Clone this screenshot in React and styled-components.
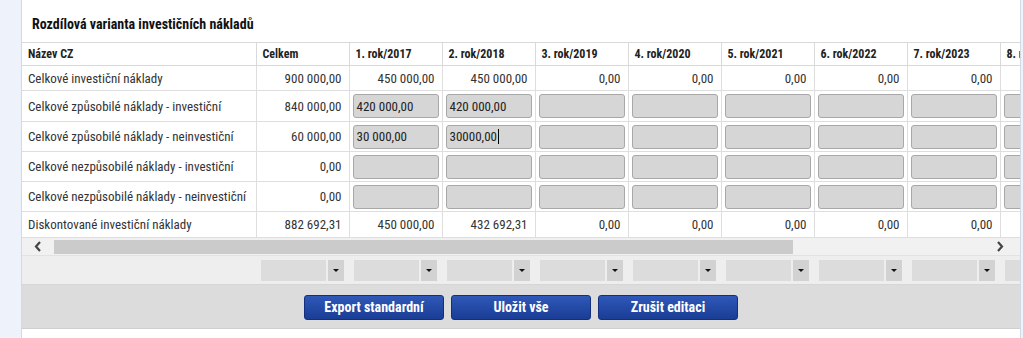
import React from 'react'
import styled, { createGlobalStyle } from 'styled-components'

const GlobalStyle = createGlobalStyle`
  html, body {
    margin: 0;
    padding: 0;
    background: #eef2fa;
    font-family: "Roboto", "Liberation Sans", sans-serif;
    font-stretch: condensed;
    color: #333;
  }
`

const Page = styled.div`
  display: flex;
  padding: 0 2px 0 21px;
  height: 338px;
  overflow: hidden;
`

const Panel = styled.div`
  flex: 1;
  min-width: 0;
  background: #fff;
  border-left: 1px solid #d4d8e0;
  border-right: 1px solid #d4d8e0;
  display: flex;
  flex-direction: column;
`

const Title = styled.h2`
  margin: 0;
  padding: 16px 0 0 10px;
  height: 42px;
  box-sizing: border-box;
  font-size: 14px;
  line-height: 17px;
  font-weight: bold;
  font-stretch: condensed;
  color: #111;
`

const Clip = styled.div`
  overflow: hidden;
`

const Table = styled.table`
  border-collapse: collapse;
  table-layout: fixed;
  width: 1071px;
  font-size: 13px;
`

const Th = styled.th`
  height: 22px;
  padding: 0 6px;
  text-align: left;
  font-size: 12px;
  font-weight: bold;
  font-stretch: condensed;
  color: #222;
  border: 1px solid #d9d9d9;
  border-left: ${({ $first }) => ($first ? 'none' : '1px solid #d9d9d9')};
  white-space: nowrap;
  overflow: hidden;
`

const Td = styled.td`
  height: ${({ $h }) => $h}px;
  padding: ${({ $input }) => ($input ? '0 3px' : '0 7px 0 6px')};
  text-align: ${({ $num }) => ($num ? 'right' : 'left')};
  border: 1px solid #dedede;
  border-left: ${({ $first }) => ($first ? 'none' : '1px solid #dedede')};
  white-space: nowrap;
  overflow: hidden;
  color: #333;
`

const Field = styled.div`
  height: 24px;
  box-sizing: border-box;
  background: #d6d6d6;
  border: 1px solid #a8a8a8;
  border-radius: 3px;
  padding: 0 3px;
  display: flex;
  align-items: center;
  font-size: 13px;
  color: #222;
`

const Caret = styled.span`
  display: inline-block;
  width: 1px;
  height: 15px;
  background: #000;
  margin-left: 1px;
`

const ScrollBar = styled.div`
  display: flex;
  align-items: center;
  height: 17px;
  background: #f1f1f1;
  border-bottom: 1px solid #e2e2e2;
`

const Arrow = styled.div`
  width: ${({ $w }) => $w}px;
  height: 100%;
  display: flex;
  justify-content: center;
  align-items: center;
`

const Track = styled.div`
  flex: 1;
  height: 100%;
  display: flex;
  align-items: center;
`

const Thumb = styled.div`
  height: 14px;
  background: #cbcbcb;
`

const FilterRow = styled.div`
  display: flex;
  align-items: center;
  height: 28px;
  background: #eeeeee;
  border-bottom: 1px solid #d6d6d6;
  padding-left: 234px;
  overflow: hidden;
`

const FilterCell = styled.div`
  flex: 0 0 93px;
  display: flex;
  gap: 2px;
  padding-left: 5px;
  box-sizing: border-box;
`

const SelectBox = styled.div`
  width: 65px;
  height: 21px;
  background: #dcdcdc;
`

const SelectBtn = styled.div`
  width: 16px;
  height: 21px;
  background: #d2d2d2;
  display: flex;
  align-items: center;
  justify-content: center;
  &::after {
    content: '';
    border-left: 3px solid transparent;
    border-right: 3px solid transparent;
    border-top: 3px solid #111;
  }
`

const ButtonBar = styled.div`
  display: flex;
  justify-content: center;
  gap: 7px;
  height: 43px;
  align-items: center;
  background: #dcdcdc;
  border-bottom: 1px solid #cfcfcf;
`

const Button = styled.button`
  width: 140px;
  height: 25px;
  border: 1px solid #142f7e;
  border-radius: 3px;
  background: linear-gradient(#2f58b8, #1a3d95);
  color: #fff;
  font-family: inherit;
  font-stretch: condensed;
  font-size: 14px;
  font-weight: bold;
  padding: 0;
  margin-top: 1px;
`

const Chevron = ({ dir }) => (
  <svg width="8" height="11" viewBox="0 0 8 11">
    <polyline
      points={dir === 'left' ? '6,1 2,5.5 6,10' : '2,1 6,5.5 2,10'}
      fill="none"
      stroke="#444"
      strokeWidth="2.2"
    />
  </svg>
)

const years = ['1. rok/2017', '2. rok/2018', '3. rok/2019', '4. rok/2020', '5. rok/2021', '6. rok/2022', '7. rok/2023', '8. rok/2024']

const empty = ['', '', '', '', '', '', '', '']

const rows = [
  { name: 'Celkové investiční náklady', total: '900 000,00', h: 24, values: ['450 000,00', '450 000,00', '0,00', '0,00', '0,00', '0,00', '0,00', ''] },
  { name: 'Celkové způsobilé náklady - investiční', total: '840 000,00', h: 30, inputs: ['420 000,00', '420 000,00', '', '', '', '', '', ''] },
  { name: 'Celkové způsobilé náklady - neinvestiční', total: '60 000,00', h: 29, inputs: ['30 000,00', '30000,00', '', '', '', '', '', ''], caret: 1 },
  { name: 'Celkové nezpůsobilé náklady - investiční', total: '0,00', h: 29, inputs: empty },
  { name: 'Celkové nezpůsobilé náklady - neinvestiční', total: '0,00', h: 29, inputs: empty },
  { name: 'Diskontované investiční náklady', total: '882 692,31', h: 25, values: ['450 000,00', '432 692,31', '0,00', '0,00', '0,00', '0,00', '0,00', ''] },
]

export default function App() {
  return (
    <>
      <GlobalStyle />
      <Page>
        <Panel>
          <Title>Rozdílová varianta investičních nákladů</Title>
          <Clip>
            <Table>
              <colgroup>
                <col style={{ width: 234 }} />
                <col style={{ width: 93 }} />
                {years.map(y => (
                  <col key={y} style={{ width: 93 }} />
                ))}
              </colgroup>
              <thead>
                <tr>
                  <Th $first>Název CZ</Th>
                  <Th>Celkem</Th>
                  {years.map(y => (
                    <Th key={y}>{y}</Th>
                  ))}
                </tr>
              </thead>
              <tbody>
                {rows.map(r => (
                  <tr key={r.name}>
                    <Td $first $h={r.h}>{r.name}</Td>
                    <Td $num $h={r.h}>{r.total}</Td>
                    {r.values &&
                      r.values.map((v, i) => (
                        <Td key={i} $num $h={r.h}>{v}</Td>
                      ))}
                    {r.inputs &&
                      r.inputs.map((v, i) => (
                        <Td key={i} $input $h={r.h}>
                          <Field>
                            {v}
                            {r.caret === i && <Caret />}
                          </Field>
                        </Td>
                      ))}
                  </tr>
                ))}
              </tbody>
            </Table>
          </Clip>
          <ScrollBar>
            <Arrow $w={32}>
              <Chevron dir="left" />
            </Arrow>
            <Track>
              <Thumb style={{ width: 739 }} />
            </Track>
            <Arrow $w={40}>
              <Chevron dir="right" />
            </Arrow>
          </ScrollBar>
          <FilterRow>
            {[0, 1, 2, 3, 4, 5, 6, 7, 8].map(i => (
              <FilterCell key={i}>
                <SelectBox />
                <SelectBtn />
              </FilterCell>
            ))}
          </FilterRow>
          <ButtonBar>
            <Button>Export standardní</Button>
            <Button>Uložit vše</Button>
            <Button>Zrušit editaci</Button>
          </ButtonBar>
        </Panel>
      </Page>
    </>
  )
}
